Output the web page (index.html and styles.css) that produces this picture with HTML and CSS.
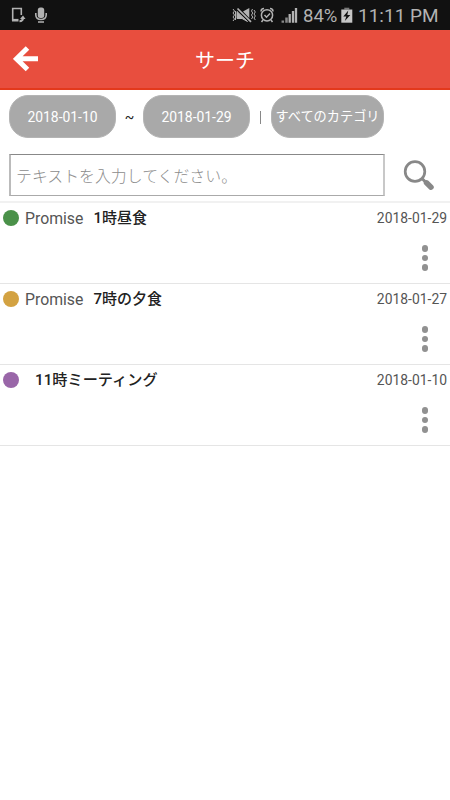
FILE: index.html
```html
<!DOCTYPE html>
<html lang="ja">
<head>
<meta charset="utf-8">
<title>サーチ</title>
<link rel="stylesheet" href="styles.css">
</head>
<body>
<div class="status">
  <svg class="status-left" width="60" height="30" viewBox="0 0 60 30" fill="none" stroke="#b2b2b2">
    <path d="M18 20H12.700V8.500H21.300V15" stroke-width="1.600"/>
    <path d="M12 20.200H18.500" stroke-width="2.600"/>
    <path d="M19.500 21.300Q23 21.300 23 17.500" stroke-width="2"/>
    <path d="M20 19 23 15.500 25.500 19Z" fill="#b2b2b2" stroke="none"/>
    <rect x="37.800" y="7.500" width="6.400" height="10.500" rx="2.500" fill="#b2b2b2" stroke="none"/>
    <path d="M35.800 13V15Q36 19.500 41 19.500Q46 19.500 46.200 15V13M38 22H44" stroke-width="1.600"/>
  </svg>
  <svg class="status-right" width="75" height="30" viewBox="228 0 75 30" fill="none" stroke="#b2b2b2">
    <path d="M237 11.500 247.500 21.500 242 18.500H237Z" fill="#b2b2b2"/>
    <path d="M243 11.500 249.300 8V18Z" fill="#b2b2b2" stroke="none"/>
    <path d="M237.500 8.500 251 21.800" stroke-width="1.700"/>
    <path d="M233 9 234.500 11 233 13 234.500 15 233 17 234.500 19 233 21M235.500 11V20M252.500 9 251.500 11 252.700 13 251.500 15 252.700 17 251.500 19M254 10 255.300 12 254 14 255.300 16 254 18 255.300 20" stroke-width="1"/>
    <circle cx="267" cy="15.300" r="5.600" stroke-width="1.500"/>
    <path d="M261 11.500Q261 8.500 264 8.500M270 8.500Q273 8.500 273 11.500M264.500 15 266.500 17.200 270 13.500M263 20 261.500 22M271 20 272.500 22" stroke-width="1.500"/>
    <path d="M282.800 20.500V22.700M286.500 17.500V22.700" stroke="#888" stroke-width="2.500"/>
    <path d="M289.700 14V22.700M293 11V22.700M296 8V22.700" stroke-width="2.300"/>
  </svg>
  <span class="battery-text">84%</span>
  <svg class="battery" width="12" height="30" viewBox="340.700 0 12 30">
    <path d="M344 7.700H349V9.500H344Z" fill="#777"/>
    <path d="M341 9.500H352V22.700H341Z" fill="#c6c6c6"/>
    <path d="M348 10.500 343 16.500H346L344.500 21 350 15H347Z" fill="#111"/>
  </svg>
  <span class="clock">11:11 PM</span>
</div>
<header class="bar">
  <svg class="back" width="26" height="26" viewBox="0 0 26 26" fill="none" stroke="#fff" stroke-width="5">
    <path d="M14.500 2 3.500 12.800 14.500 23.500M4 12.700H25"/>
  </svg>
  <h1 class="title">サーチ</h1>
</header>
<main>
  <div class="filters">
    <span class="pill">2018-01-10</span>
    <span class="tilde">~</span>
    <span class="pill">2018-01-29</span>
    <span class="divider"></span>
    <span class="pill category">すべてのカテゴリ</span>
  </div>
  <div class="search">
    <div class="field">テキストを入力してください。</div>
    <svg class="lens" width="32" height="32" viewBox="403 159 32 32" fill="none" stroke="#888">
      <circle cx="415" cy="171.500" r="9.800" stroke-width="2.700"/>
      <path d="M422 178.500 426 182.500" stroke-width="3"/>
      <path d="M426.500 182.800 431 187.200" stroke-width="5.500" stroke-linecap="round"/>
    </svg>
  </div>
  <ul class="list">
    <li class="item">
      <i class="dot green"></i><span class="tag">Promise</span><b class="name">1時昼食</b><time class="date">2018-01-29</time>
      <span class="menu"><i></i><i></i><i></i></span>
    </li>
    <li class="item">
      <i class="dot gold"></i><span class="tag">Promise</span><b class="name">7時の夕食</b><time class="date">2018-01-27</time>
      <span class="menu"><i></i><i></i><i></i></span>
    </li>
    <li class="item">
      <i class="dot purple"></i><span class="tag"></span><b class="name long">11時ミーティング</b><time class="date">2018-01-10</time>
      <span class="menu"><i></i><i></i><i></i></span>
    </li>
  </ul>
</main>
</body>
</html>
```
FILE: styles.css
```css
* { box-sizing: border-box; }
body {
  margin: 0;
  background: #fff;
  color: #222;
  font-family: Roboto, "Noto Sans CJK JP", sans-serif;
}
.status {
  display: flex;
  height: 30px;
  background: #111;
  color: #b2b2b2;
  font-size: 19px;
  line-height: 32px;
  white-space: nowrap;
}
.status-right { margin-left: 168px; }
.battery-text { width: 37px; font-size: 18.5px; }
.battery { margin-left: 1px; }
.clock { margin-left: 5px; }
.bar {
  display: grid;
  grid-template-columns: 52px 1fr 52px;
  align-items: center;
  height: 60px;
  border-bottom: 2px solid #e3391c;
  background: #e84e3e;
  color: #fff;
}
.back { margin-left: 13px; }
.title {
  margin: 3px 0 0;
  text-align: center;
  font-size: 20px;
  font-weight: 400;
  line-height: 30px;
}
.filters {
  display: flex;
  align-items: center;
  height: 43px;
  margin: 5px 0 0 9px;
}
.pill {
  width: 107px;
  height: 43px;
  border: 1px solid #b4b4b4;
  border-radius: 19px;
  background: #a9a9a9;
  color: #fff;
  font-size: 13.9px;
  line-height: 43px;
  text-align: center;
  white-space: nowrap;
}
.tilde { width: 27px; text-align: center; font-size: 14px; }
.divider { width: 1px; height: 13px; margin: 2px 10px 0 10px; background: #888; }
.category { width: 113px; font-size: 13.2px; line-height: 42px; }
.search {
  display: flex;
  align-items: center;
  height: 63px;
  padding: 0 15px 0 9px;
}
.field {
  width: 376px;
  height: 42px;
  margin-top: 11px;
  padding-left: 5px;
  border: 1px solid #aaa;
  border-width: 1px 2px 1px 2px;
  border-color: #888 #c8c8c8 #aaa #bbb;
  color: #8c8c8c;
  font-size: 15.9px;
  font-weight: 300;
  line-height: 43px;
}
.lens { margin: 11px 0 0 18px; }
.list { margin: 0; padding: 0; list-style: none; border-top: 2px solid #f1f1f1; }
.item {
  display: grid;
  grid-template-columns: 16px auto auto 1fr;
  grid-template-rows: 30px 50px;
  align-items: center;
  height: 81px;
  padding: 0 3px;
  border-bottom: 1px solid #e5e5e5;
}
.dot { width: 16px; height: 16px; margin-top: -1px; border-radius: 50%; }
.green { background: #4a9149; }
.gold { background: #d3a242; }
.purple { background: #9966a8; }
.tag { margin-left: 6px; color: #555; font-size: 15.8px; font-weight: 400; }
.name { margin-left: 10px; font-size: 15px; font-weight: 500; line-height: 22px; }
.long { font-size: 15.2px; }
.date { justify-self: end; color: #555; font-size: 13.9px; }
.menu {
  grid-column: 1 / -1;
  justify-self: end;
  display: flex;
  flex-direction: column;
  gap: 3px;
  margin-right: 19px;
}
.menu i { width: 6.500px; height: 6.500px; border-radius: 50%; background: #919191; }
```
